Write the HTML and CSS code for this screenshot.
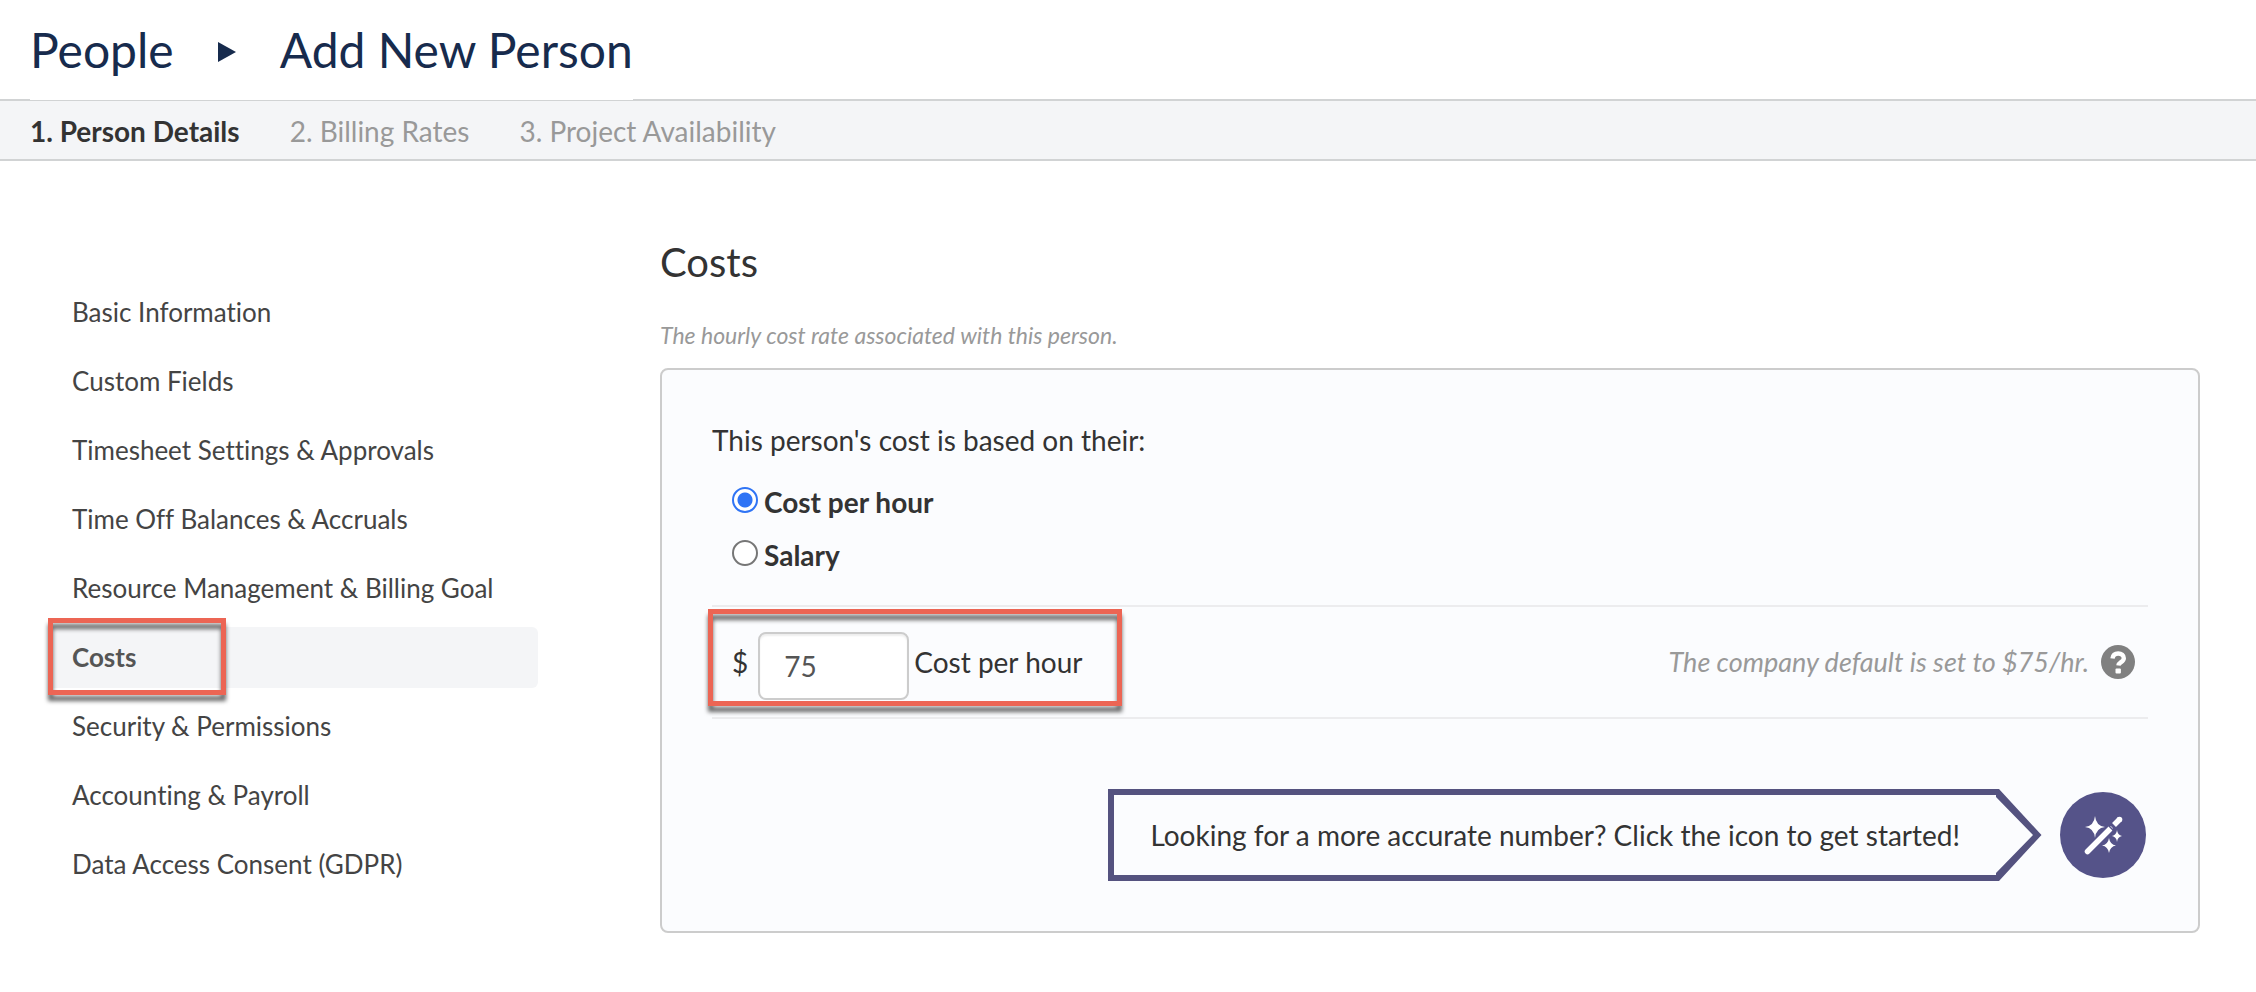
FILE: index.html
```html
<!DOCTYPE html>
<html lang="en">
<head>
<meta charset="utf-8">
<title>Add New Person</title>
<link rel="stylesheet" href="styles.css">
</head>
<body>
<header class="page-header">
  <h1 class="crumbs">
    <a href="#">People</a>
    <svg class="crumb-arrow" viewBox="0 0 18 20" aria-hidden="true"><path d="M0 0 18 10 0 20z" fill="#172b4d"/></svg>
    <span>Add New Person</span>
  </h1>
</header>
<nav class="steps" aria-label="Steps">
  <a class="step step-current" href="#">1. Person Details</a>
  <a class="step" href="#">2. Billing Rates</a>
  <a class="step" href="#">3. Project Availability</a>
</nav>
<div class="layout">
  <nav class="sidebar" aria-label="Sections">
    <a class="section-link" href="#">Basic Information</a>
    <a class="section-link" href="#">Custom Fields</a>
    <a class="section-link" href="#">Timesheet Settings &amp; Approvals</a>
    <a class="section-link" href="#">Time Off Balances &amp; Accruals</a>
    <a class="section-link" href="#">Resource Management &amp; Billing Goal</a>
    <a class="section-link section-active" href="#">Costs<span class="marker marker-nav"></span></a>
    <a class="section-link" href="#">Security &amp; Permissions</a>
    <a class="section-link" href="#">Accounting &amp; Payroll</a>
    <a class="section-link" href="#">Data Access Consent (GDPR)</a>
  </nav>
  <main class="content">
    <h2 class="title">Costs</h2>
    <p class="subtitle">The hourly cost rate associated with this person.</p>
    <form class="card">
      <fieldset class="basis">
        <legend>This person's cost is based on their:</legend>
        <div class="choice"><input type="radio" name="basis" id="hourly" checked><label for="hourly">Cost per hour</label></div>
        <div class="choice"><input type="radio" name="basis" id="salary"><label for="salary">Salary</label></div>
      </fieldset>
      <div class="rate-row">
        <div class="rate">
          <span class="rate-text">$</span>
          <input class="rate-input" type="text" id="rate" value="75">
          <label class="rate-text" for="rate">Cost per hour</label>
          <span class="marker marker-rate"></span>
        </div>
        <div class="default-note">
          <em>The company default is set to $75/hr.</em>
          <button class="help" type="button" aria-label="Help">
            <svg viewBox="0 0 34 34" aria-hidden="true"><circle cx="17" cy="17" r="17" fill="#808080"/><path d="M11.5 13.5c.4-3.3 2.500-5 5.700-5 3.300 0 5.600 1.800 5.600 4.700 0 3.800-5 3.900-5.400 7.300" fill="none" stroke="#fff" stroke-width="4.400"/><rect x="14.500" y="23.500" width="5.400" height="5" rx="1" fill="#fff"/></svg>
          </button>
        </div>
      </div>
      <div class="wizard">
        <div class="callout">
          <p class="callout-text">Looking for a more accurate number? Click the icon to get started!</p>
          <svg class="callout-tip" viewBox="0 0 46 92" aria-hidden="true"><path d="M0 0H3L45.500 46 3 92H0V84L37 46 0 8z" fill="#54527f"/></svg>
        </div>
        <button class="wand" type="button" aria-label="Get started">
          <svg viewBox="0 0 86 86" aria-hidden="true">
            <circle cx="43" cy="43" r="43" fill="#555389"/>
            <g fill="#fff"><path d="M35 24Q36 34 45 35Q36 36 35 46Q34 36 25 35Q34 34 35 24zM49 46Q50 52.500 56 53.500Q50 54.500 49 61Q48 54.500 42 53.500Q48 52.500 49 46zM57 38Q57.500 43 62 44Q57.500 45 57 50Q56.500 45 52 44Q56.500 43 57 38z"/></g>
            <path d="M27.500 59.500 49 38M55.500 31.500 59.500 27.500" stroke="#555389" stroke-width="8" fill="none"/>
            <path d="M27.500 59.500 50 37" stroke="#fff" stroke-width="5.500" stroke-linecap="round" fill="none"/>
            <path d="M54 33 60 27" stroke="#fff" stroke-width="5.500" fill="none"/><circle cx="59.500" cy="27.500" r="2.800" fill="#fff"/>
            <path d="m49 34 5 5" stroke="#555389" stroke-width="1.500"/>
          </svg>
        </button>
      </div>
    </form>
  </main>
</div>
</body>
</html>
```
FILE: styles.css
```css
* { box-sizing: border-box; }
body {
  margin: 0;
  background: #fff;
  color: #333;
  font: 28px/36px Lato, "Liberation Sans", sans-serif;
  font-variant-ligatures: none;
}
a { color: inherit; text-decoration: none; }
h1, h2, p { margin: 0; font-weight: 400; }
button { display: block; padding: 0; border: 0; background: none; cursor: pointer; }
svg { display: block; }

.page-header { padding: 0 30px; }
.crumbs {
  display: flex;
  align-items: center;
  width: fit-content;
  height: 100px;
  margin-bottom: -1px;
  position: relative;
  background: #fff;
  color: #172b4d;
  font-size: 48px;
  line-height: 100px;
}
.crumb-arrow { width: 18px; height: 20px; margin: 4px 44px 0; }

.steps {
  display: flex;
  gap: 50px;
  padding: 12px 30px 10px;
  border-top: 2px solid #d1d3d4;
  border-bottom: 2px solid #d1d3d4;
  background: #f4f5f7;
}
.step { color: #999; }
.step-current { color: #333; font-weight: 700; }

.layout {
  display: grid;
  grid-template-columns: 490px minmax(0, 1fr);
  gap: 122px;
  padding: 75px 56px 56px 48px;
}
.sidebar {
  display: flex;
  flex-direction: column;
  gap: 8px;
  padding-top: 46px;
}
.section-link {
  position: relative;
  padding: 12px 24px 13px;
  border-radius: 6px;
  color: #444;
  font-size: 26px;
}
.section-active { background: #f4f5f7; color: #555; font-weight: 700; }

.marker {
  position: absolute;
  border: 5px solid #ec6554;
  filter: drop-shadow(0 6px 2px #666);
  pointer-events: none;
}
.marker-nav { inset: -9px auto -7px 0; width: 178px; }
.marker-rate { inset: 2px -40px 11px -24px; }

.title { font-size: 40px; line-height: 52px; }
.subtitle {
  margin-top: 31px;
  color: #999;
  font-size: 23px;
  line-height: 32px;
  font-style: italic;
}
.card {
  margin-top: 17px;
  padding: 52px 50px 50px;
  border: 2px solid #ccc;
  border-radius: 8px;
  background: #fbfcfe;
}
.basis { margin: 0; padding: 0; border: 0; }
.basis legend { padding: 0; margin-bottom: 18px; }
.choice {
  display: flex;
  gap: 6px;
  padding: 8px 0 9px 20px;
  font-weight: 700;
}
.choice input {
  appearance: none;
  width: 26px;
  height: 26px;
  margin: 3px 0 0;
  border: 2px solid #767676;
  border-radius: 50%;
  background: #fff;
}
.choice input:checked {
  border-color: #2f74f5;
  background: radial-gradient(circle, #2f74f5 7px, #fff 8px);
}
.rate-row {
  display: flex;
  justify-content: space-between;
  margin-top: 23px;
  border-top: 2px solid #ececee;
  border-bottom: 2px solid #ececee;
}
.rate {
  position: relative;
  display: flex;
  align-items: center;
  margin-left: 20px;
  padding: 25px 0 17px;
}
.rate-text { padding-bottom: 8px; }
.rate-input {
  width: 151px;
  height: 68px;
  margin: 0 5px 0 10px;
  padding: 0 24px;
  border: 2px solid #ccc;
  border-radius: 8px;
  background: #fff;
  box-shadow: inset 0 2px 2px #eee;
  color: #555;
  font: inherit;
}
.default-note {
  display: flex;
  align-items: center;
  gap: 12px;
  padding-right: 13px;
  color: #999;
  font-size: 27px;
}
.help svg { width: 34px; height: 34px; }
.wizard {
  display: flex;
  justify-content: flex-end;
  align-items: center;
  gap: 18px;
  margin-top: 70px;
  padding-right: 2px;
}
.callout { display: flex; }
.callout-text {
  padding: 22px 36px;
  border: 6px solid #54527f;
  border-right: 0;
  background: #fbfcfe;
}
.callout-tip { width: 46px; height: 92px; }
.wand svg { width: 86px; height: 86px; }
```
